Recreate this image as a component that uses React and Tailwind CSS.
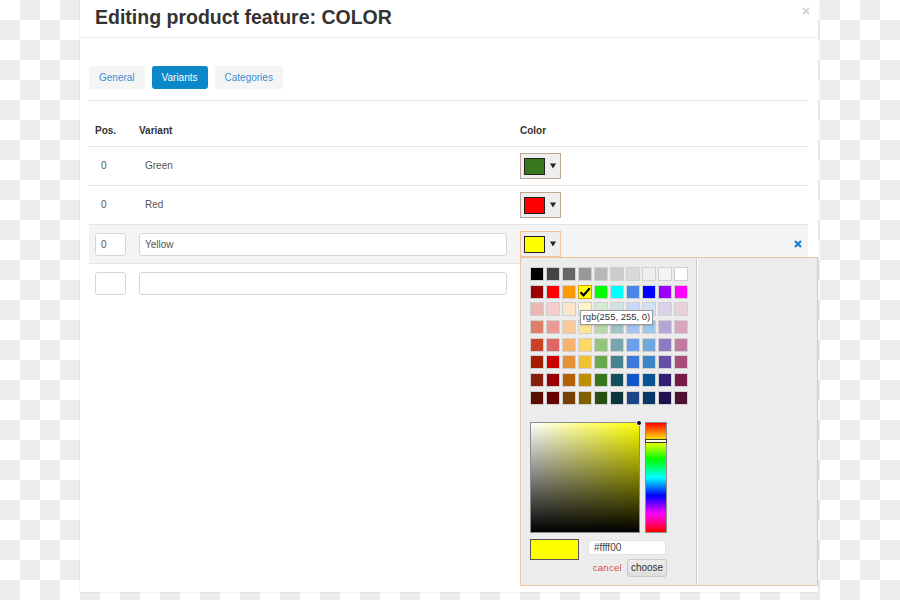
import React from "react";

const palette = [
    ["#000000", "#434343", "#666666", "#999999", "#b7b7b7", "#cccccc", "#d9d9d9", "#efefef", "#f3f3f3", "#ffffff"],
    ["#980000", "#ff0000", "#ff9900", "#ffff00", "#00ff00", "#00ffff", "#4a86e8", "#0000ff", "#9900ff", "#ff00ff"],
    ["#e6b8af", "#f4cccc", "#fce5cd", "#fff2cc", "#d9ead3", "#d0e0e3", "#c9daf8", "#cfe2f3", "#d9d2e9", "#ead1dc"],
    ["#dd7e6b", "#ea9999", "#f9cb9c", "#ffe599", "#b6d7a8", "#a2c4c9", "#a4c2f4", "#9fc5e8", "#b4a7d6", "#d5a6bd"],
    ["#cc4125", "#e06666", "#f6b26b", "#ffd966", "#93c47d", "#76a5af", "#6d9eeb", "#6fa8dc", "#8e7cc3", "#c27ba0"],
    ["#a61c00", "#cc0000", "#e69138", "#f1c232", "#6aa84f", "#45818e", "#3c78d8", "#3d85c6", "#674ea7", "#a64d79"],
    ["#85200c", "#990000", "#b45f06", "#bf9000", "#38761d", "#134f5c", "#1155cc", "#0b5394", "#351c75", "#741b47"],
    ["#5b0f00", "#660000", "#783f04", "#7f6000", "#274e13", "#0c343d", "#1c4587", "#073763", "#20124d", "#4c1130"],
];

export default function App() {
    return (
        <div className="w-[900px] h-[600px] overflow-hidden bg-[image:conic-gradient(#ececec_25%,#fff_0_50%,#ececec_0_75%,#fff_0)] bg-[length:40px_40px] font-['Liberation_Sans',Arial,sans-serif]">
            <div className="relative ml-[80px] w-[738px] h-[592px] bg-white shadow-[0_0_2px_rgba(0,0,0,0.12)]">

                {/* HEADER */}
                <div className="h-[38px] border-b border-[#ebebeb] pl-[15px] pt-[8px]">
                    <h1 className="text-[19.5px] leading-none font-bold text-[#333]">
                        Editing product feature: COLOR
                    </h1>
                </div>
                <svg className="absolute top-[7px] right-[8px]" width="8" height="8" viewBox="0 0 8 8">
                    <path d="M1 1L7 7M7 1L1 7" stroke="#d4d4d4" strokeWidth="2" />
                </svg>

                <div className="pl-[9px] pr-[10px]">

                    {/* TABS */}
                    <div className="flex gap-[7px] pt-[28px] pb-[11px] border-b border-[#e0e0e0] text-[10px]">
                        <Tab label="General" />
                        <Tab label="Variants" active />
                        <Tab label="Categories" />
                    </div>

                    {/* TABLE HEAD */}
                    <div className="grid grid-cols-[44px_381px_1fr_20px] h-[45px] pt-[24px] pl-[6px] text-[10px] leading-[12px] font-bold text-[#333]">
                        <div>Pos.</div>
                        <div>Variant</div>
                        <div>Color</div>
                    </div>

                    {/* ROWS */}
                    <StaticRow pos="0" name="Green" color="#38761d" />
                    <StaticRow pos="0" name="Red" color="#ff0000" />

                    <div className="grid grid-cols-[44px_381px_1fr_20px] items-center h-[39px] border-t border-[#e3e3e3] pl-[6px] bg-[#f4f4f4]">
                        <Input value="0" className="w-[31px]" />
                        <Input value="Yellow" className="w-[368px]" />
                        <div className="relative w-[41px]">
                            <Replacer color="#ffff00" active />
                            <Picker />
                        </div>
                        <div className="flex justify-center">
                            <svg width="8" height="8" viewBox="0 0 8 8">
                                <path d="M1 1L7 7M7 1L1 7" stroke="#1a80cf" strokeWidth="2.2" />
                            </svg>
                        </div>
                    </div>

                    <div className="grid grid-cols-[44px_381px_1fr_20px] items-center h-[39px] border-t border-[#e3e3e3] pl-[6px]">
                        <Input value="" className="w-[31px]" />
                        <Input value="" className="w-[368px]" />
                    </div>

                </div>
            </div>
        </div>
    );
}

function Tab({ label, active }) {
    return (
        <div className={`h-[23px] px-[10px] flex items-center rounded-[3px] ${
            active ? "bg-[#0a88c9] text-white" : "bg-[#f5f5f5] text-[#3b8ccf]"
        }`}>
            {label}
        </div>
    );
}

function StaticRow({ pos, name, color }) {
    return (
        <div className="grid grid-cols-[44px_381px_1fr_20px] items-center h-[39px] border-t border-[#e3e3e3] pl-[6px] text-[10px] text-[#555]">
            <div className="pl-[6px] -mt-[1px]">{pos}</div>
            <div className="pl-[6px] -mt-[1px]">{name}</div>
            <Replacer color={color} />
        </div>
    );
}

function Input({ value, className }) {
    return (
        <div className={`h-[23px] flex items-center pl-[5px] bg-white border border-[#d6d6d6] rounded-[3px] text-[10px] text-[#555] ${className}`}>
            {value}
        </div>
    );
}

function Replacer({ color, active }) {
    return (
        <div className={`flex items-center h-[26px] w-[41px] border bg-[#eee] pl-[3px] ${
            active ? "border-[#f0c49b]" : "border-[#bba896]"
        }`}>
            <div className="w-[21px] h-[17px] border border-[#222]" style={{ backgroundColor: color }} />
            <svg className="ml-[5px]" width="6" height="6" viewBox="0 0 6 6">
                <path d="M0 0.5H6L3 5.5Z" fill="#222" />
            </svg>
        </div>
    );
}

/*
Spectrum-like colour picker popup
*/
function Picker() {
    return (
        <div className="absolute top-full left-0 z-10 w-[298px] h-[329px] flex border border-[#f0c49b] bg-[#ececec]">
            <div className="w-[176px] border-r border-[#cccccc] pl-[9px] pt-[9px]">

                <div className="flex flex-col gap-[3.7px]">
                    {palette.map((row, i) => (
                        <div key={i} className="flex gap-[2px]">
                            {row.map((c) => (
                                <div
                                    key={c}
                                    className={`relative w-[14px] h-[14px] border ${
                                        c === "#ffff00" ? "border-[#d9a400]" : "border-[#d0d0d0]"
                                    }`}
                                    style={{ backgroundColor: c }}
                                >
                                    {c === "#ffff00" && (
                                        <svg className="absolute inset-0" width="12" height="12" viewBox="0 0 12 12">
                                            <path d="M1.5 6.2L4.5 9.3L10.8 2.2" fill="none" stroke="#000" strokeWidth="2.2" />
                                        </svg>
                                    )}
                                </div>
                            ))}
                        </div>
                    ))}
                </div>

                {/* saturation + hue */}
                <div className="flex gap-[5px] mt-[17px]">
                    <div className="relative w-[110px] h-[111px] border border-[#8c8c8c] bg-[#ffff00]">
                        <div className="absolute inset-0 bg-[image:linear-gradient(to_right,#fff,rgba(255,255,255,0))]" />
                        <div className="absolute inset-0 bg-[image:linear-gradient(to_top,#000,rgba(0,0,0,0))]" />
                        <div className="absolute -top-[3px] -right-[3px] w-[6px] h-[6px] rounded-full bg-black border border-white" />
                    </div>
                    <div className="relative w-[22px] h-[111px] border border-[#8c8c8c] bg-[image:linear-gradient(to_bottom,#f00,#ff0,#0f0,#0ff,#00f,#f0f,#f00)]">
                        <div className="absolute top-[16px] -left-[1px] -right-[1px] h-[4px] border border-[#333] bg-[#fffbe0]" />
                    </div>
                </div>

                {/* preview / input / buttons */}
                <div className="w-[137px] mt-[6px]">
                    <div className="flex items-start">
                        <div className="w-[49px] h-[21px] border border-[#555] bg-[#ffff00]" />
                        <div className="ml-[9px] mt-[1px] w-[78px] h-[15px] flex items-center pl-[5px] bg-white border border-[#e2e2e2] rounded-[3px] text-[10px] text-[#444]">
                            #ffff00
                        </div>
                    </div>
                    <div className="flex justify-end items-center gap-[5px] -mt-[1px]">
                        <span className="text-[9.5px] text-[#d94c4c] tracking-[0.3px]">cancel</span>
                        <div className="w-[40px] h-[18px] flex items-center justify-center rounded-[3px] border border-[#c8c8c8] bg-[image:linear-gradient(to_bottom,#eee,#ddd)] text-[10px] text-[#333]">
                            choose
                        </div>
                    </div>
                </div>
            </div>
            <div className="flex-1 border-l border-white" />

            {/* tooltip */}
            <div className="absolute left-[59px] top-[52px] w-[73px] h-[15px] flex items-center justify-center bg-white border border-[#999] shadow-[0_1px_2px_rgba(0,0,0,0.15)] text-[9.5px] text-[#333]">
                rgb(255, 255, 0)
            </div>
        </div>
    );
}
